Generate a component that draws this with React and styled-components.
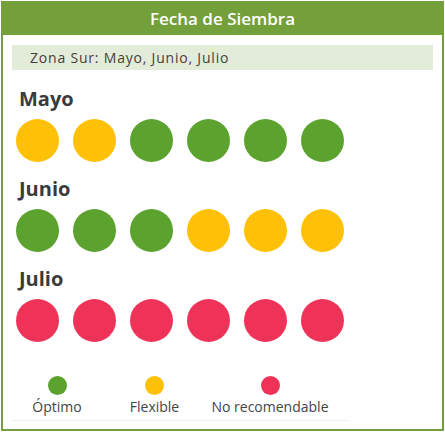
import styled, { createGlobalStyle } from 'styled-components';

const GlobalStyle = createGlobalStyle`
  body {
    margin: 0;
    background: #fff;
    font-family: "Open Sans", "Liberation Sans", sans-serif;
  }
`

const COLORS = {
  optimo: '#5ba22e',
  flexible: '#ffc107',
  no: '#ef3358',
}

const Card = styled.div`
  margin: 1px;
  width: 443px;
  height: 430px;
  box-sizing: border-box;
  border: 2px solid #73a03b;
  display: flex;
  flex-direction: column;
  background: #fff;
`

const Header = styled.div`
  height: 32px;
  background: #73a03b;
  color: #fff;
  display: flex;
  align-items: center;
  justify-content: center;
  font-size: 17px;
  font-weight: 600;
  padding-bottom: 1px;
  box-sizing: border-box;
`

const ZoneBar = styled.div`
  margin: 10px 9px 0;
  height: 25px;
  background: #e3ecd9;
  color: #4b3c3c;
  font-size: 14px;
  letter-spacing: 0.8px;
  display: flex;
  align-items: center;
  padding-left: 18px;
`

const Months = styled.div`
  display: flex;
  flex-direction: column;
  gap: 15px;
  padding: 17px 0 0 13px;
`

const Month = styled.div`
  display: flex;
  flex-direction: column;
  gap: 8px;
`

const MonthTitle = styled.h3`
  margin: 0;
  padding-left: 3px;
  font-size: 20px;
  line-height: 24px;
  font-weight: 700;
  color: #3a3a3a;
`

const Dots = styled.div`
  display: flex;
  gap: 14px;
`

const Dot = styled.span`
  width: ${p => p.$size}px;
  height: ${p => p.$size}px;
  border-radius: 50%;
  background: ${p => COLORS[p.$kind]};
  flex: none;
`

const Legend = styled.div`
  margin: 34px 9px 0;
  width: 337px;
  display: grid;
  grid-template-columns: 90px 105px 126px;
  padding-bottom: 4px;
  border-bottom: 1px solid #eeeeee;
`

const LegendItem = styled.div`
  display: flex;
  flex-direction: column;
  align-items: center;
  gap: 3px;
`

const LegendLabel = styled.span`
  font-size: 14px;
  line-height: 18px;
  color: #444;
  white-space: nowrap;
`

const months = [
  { name: 'Mayo', dots: ['flexible', 'flexible', 'optimo', 'optimo', 'optimo', 'optimo'] },
  { name: 'Junio', dots: ['optimo', 'optimo', 'optimo', 'flexible', 'flexible', 'flexible'] },
  { name: 'Julio', dots: ['no', 'no', 'no', 'no', 'no', 'no'] },
]

const legend = [
  { kind: 'optimo', label: 'Óptimo' },
  { kind: 'flexible', label: 'Flexible' },
  { kind: 'no', label: 'No recomendable' },
]

const App = () => {
  return (
    <>
      <GlobalStyle />
      <Card>
        <Header>Fecha de Siembra</Header>
        <ZoneBar>Zona Sur: Mayo, Junio, Julio</ZoneBar>
        <Months>
          {months.map(m => (
            <Month key={m.name}>
              <MonthTitle>{m.name}</MonthTitle>
              <Dots>
                {m.dots.map((k, i) => <Dot key={i} $kind={k} $size={43} />)}
              </Dots>
            </Month>
          ))}
        </Months>
        <Legend>
          {legend.map(l => (
            <LegendItem key={l.kind}>
              <Dot $kind={l.kind} $size={19} />
              <LegendLabel>{l.label}</LegendLabel>
            </LegendItem>
          ))}
        </Legend>
      </Card>
    </>
  )
}

export default App
